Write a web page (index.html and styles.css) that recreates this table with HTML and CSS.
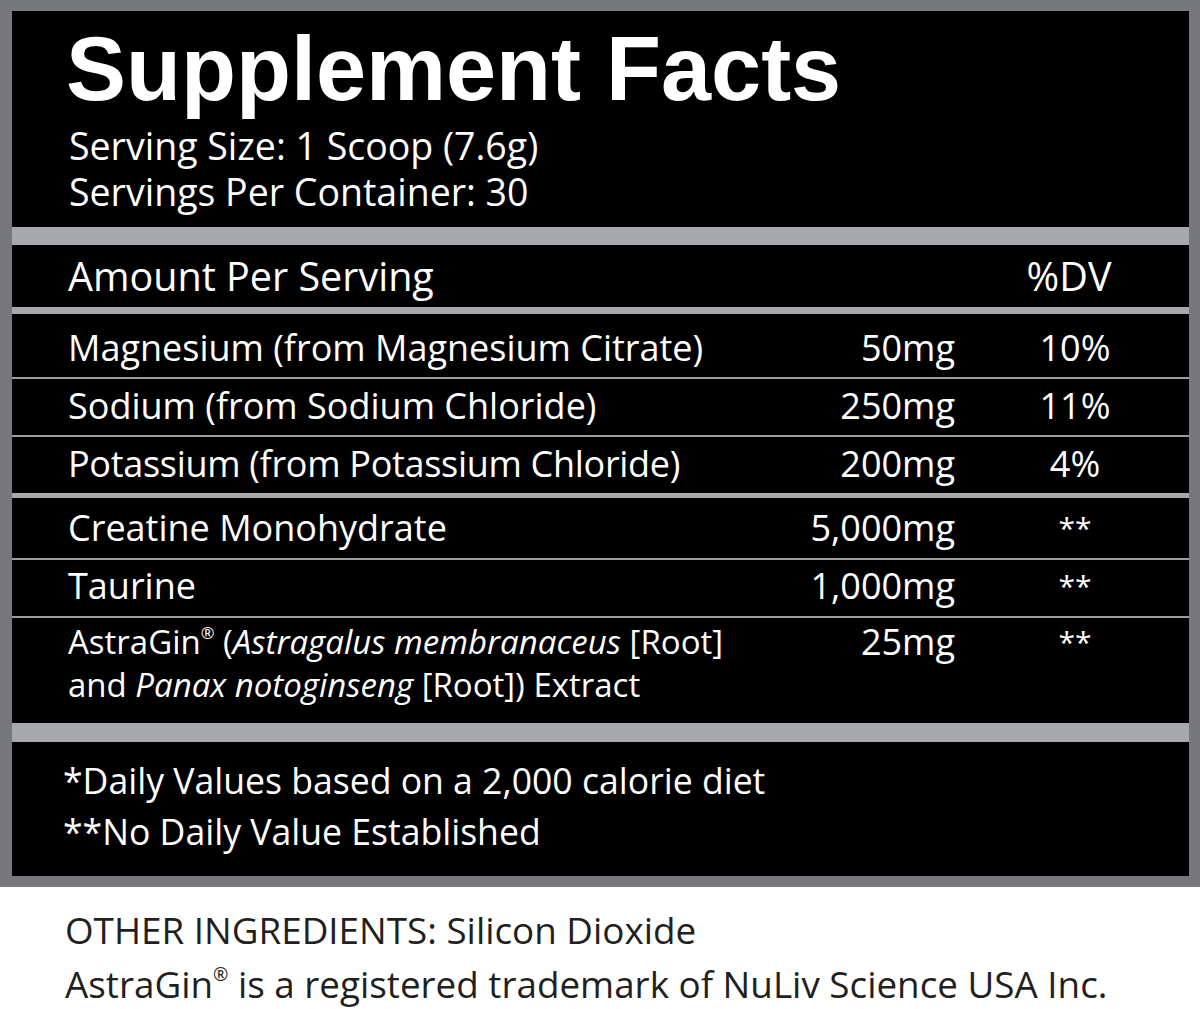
FILE: index.html
```html
<!DOCTYPE html>
<html lang="en">
<head>
<meta charset="utf-8">
<title>Supplement Facts</title>
<link rel="stylesheet" href="styles.css">
</head>
<body>
<div class="frame">
  <div class="panel">
    <div class="head">
      <h1 class="title">Supplement Facts</h1>
      <p class="serving">Serving Size: 1 Scoop (7.6g)</p>
      <p class="serving">Servings Per Container: 30</p>
    </div>
    <div class="bar bar-thick"></div>
    <div class="row row-head">
      <span class="name">Amount Per Serving</span>
      <span class="amt"></span>
      <span class="dv">%DV</span>
    </div>
    <div class="bar bar-thin"></div>
    <div class="row row-first">
      <span class="name">Magnesium (from Magnesium Citrate)</span>
      <span class="amt">50mg</span>
      <span class="dv">10%</span>
    </div>
    <div class="sep"></div>
    <div class="row">
      <span class="name">Sodium (from Sodium Chloride)</span>
      <span class="amt">250mg</span>
      <span class="dv">11%</span>
    </div>
    <div class="sep"></div>
    <div class="row">
      <span class="name name-narrow">Potassium (from Potassium Chloride)</span>
      <span class="amt">200mg</span>
      <span class="dv">4%</span>
    </div>
    <div class="bar bar-mid"></div>
    <div class="row row-creatine">
      <span class="name">Creatine Monohydrate</span>
      <span class="amt">5,000mg</span>
      <span class="dv star">**</span>
    </div>
    <div class="sep"></div>
    <div class="row row-taurine">
      <span class="name">Taurine</span>
      <span class="amt">1,000mg</span>
      <span class="dv star">**</span>
    </div>
    <div class="sep"></div>
    <div class="row row-astra">
      <span class="name astra-name"><span class="astra-line">AstraGin<sup class="reg">®</sup> (<i>Astragalus membranaceus</i> [Root]</span><span class="astra-line">and <i>Panax notoginseng</i> [Root]) Extract</span></span>
      <span class="amt">25mg</span>
      <span class="dv star">**</span>
    </div>
    <div class="bar bar-thick bar-foot"></div>
    <div class="notes">
      <p>*Daily Values based on a 2,000 calorie diet</p>
      <p>**No Daily Value Established</p>
    </div>
  </div>
</div>
<div class="other">
  <p>OTHER INGREDIENTS: Silicon Dioxide</p>
  <p>AstraGin<sup class="reg">®</sup> is a registered trademark of NuLiv Science USA Inc.</p>
</div>
</body>
</html>
```
FILE: styles.css
```css
html, body {
  margin: 0;
  padding: 0;
  background: #ffffff;
}

body {
  font-family: "Open Sans", "Liberation Sans", sans-serif;
  width: 1200px;
}

p {
  margin: 0;
}

.frame {
  background: #77787b;
  padding: 11px 11px 11px 12px;
}

.panel {
  background: #000000;
  color: #ffffff;
}

.head {
  padding: 10px 0 12px 54px;
}

.title {
  margin: 0 0 6px 0;
  font-family: "Liberation Sans", Arial, sans-serif;
  font-weight: 700;
  font-size: 90px;
  line-height: 96px;
}

.serving {
  padding-left: 3px;
  font-size: 37.5px;
  line-height: 46px;
}

.bar {
  background: #a7a9ac;
}

.bar-thick {
  height: 18px;
}

.bar-foot {
  height: 19px;
}

.bar-thin {
  height: 7px;
}

.bar-mid {
  height: 5px;
}

.sep {
  height: 2px;
  background: #9c9ea1;
}

.row {
  display: grid;
  grid-template-columns: 1fr auto 160px;
  column-gap: 40px;
  align-items: start;
  padding: 1px 34px 3px 56px;
  font-size: 36px;
  line-height: 52px;
}

.row .amt {
  text-align: right;
}

.row .dv {
  text-align: center;
}

.name-narrow {
  letter-spacing: -0.3px;
}

.row-head {
  padding-top: 0;
  padding-bottom: 0;
  font-size: 39.5px;
  line-height: 62px;
}

.row-head .dv {
  padding-right: 12px;
}

.row-first {
  padding-top: 8px;
  padding-bottom: 3px;
  line-height: 52px;
}

.row-creatine {
  padding-top: 4px;
  padding-bottom: 4px;
}

.row-taurine {
  padding-top: 1px;
  padding-bottom: 5px;
  line-height: 50px;
}

.row-astra {
  padding-top: 2px;
  padding-bottom: 17px;
  line-height: 43px;
}

.astra-name {
  display: flex;
  flex-direction: column;
  font-size: 33px;
  line-height: 43px;
}

.astra-line {
  white-space: nowrap;
}

.star {
  font-size: 30px;
}

.reg {
  font-size: 0.5em;
  line-height: 0;
  vertical-align: 0.9em;
}

.notes {
  padding: 13px 0 19px 51px;
  font-size: 35.6px;
  line-height: 51px;
}

.other {
  padding: 16px 0 0 65px;
  color: #231f20;
  font-size: 36.8px;
  line-height: 54px;
}
```
